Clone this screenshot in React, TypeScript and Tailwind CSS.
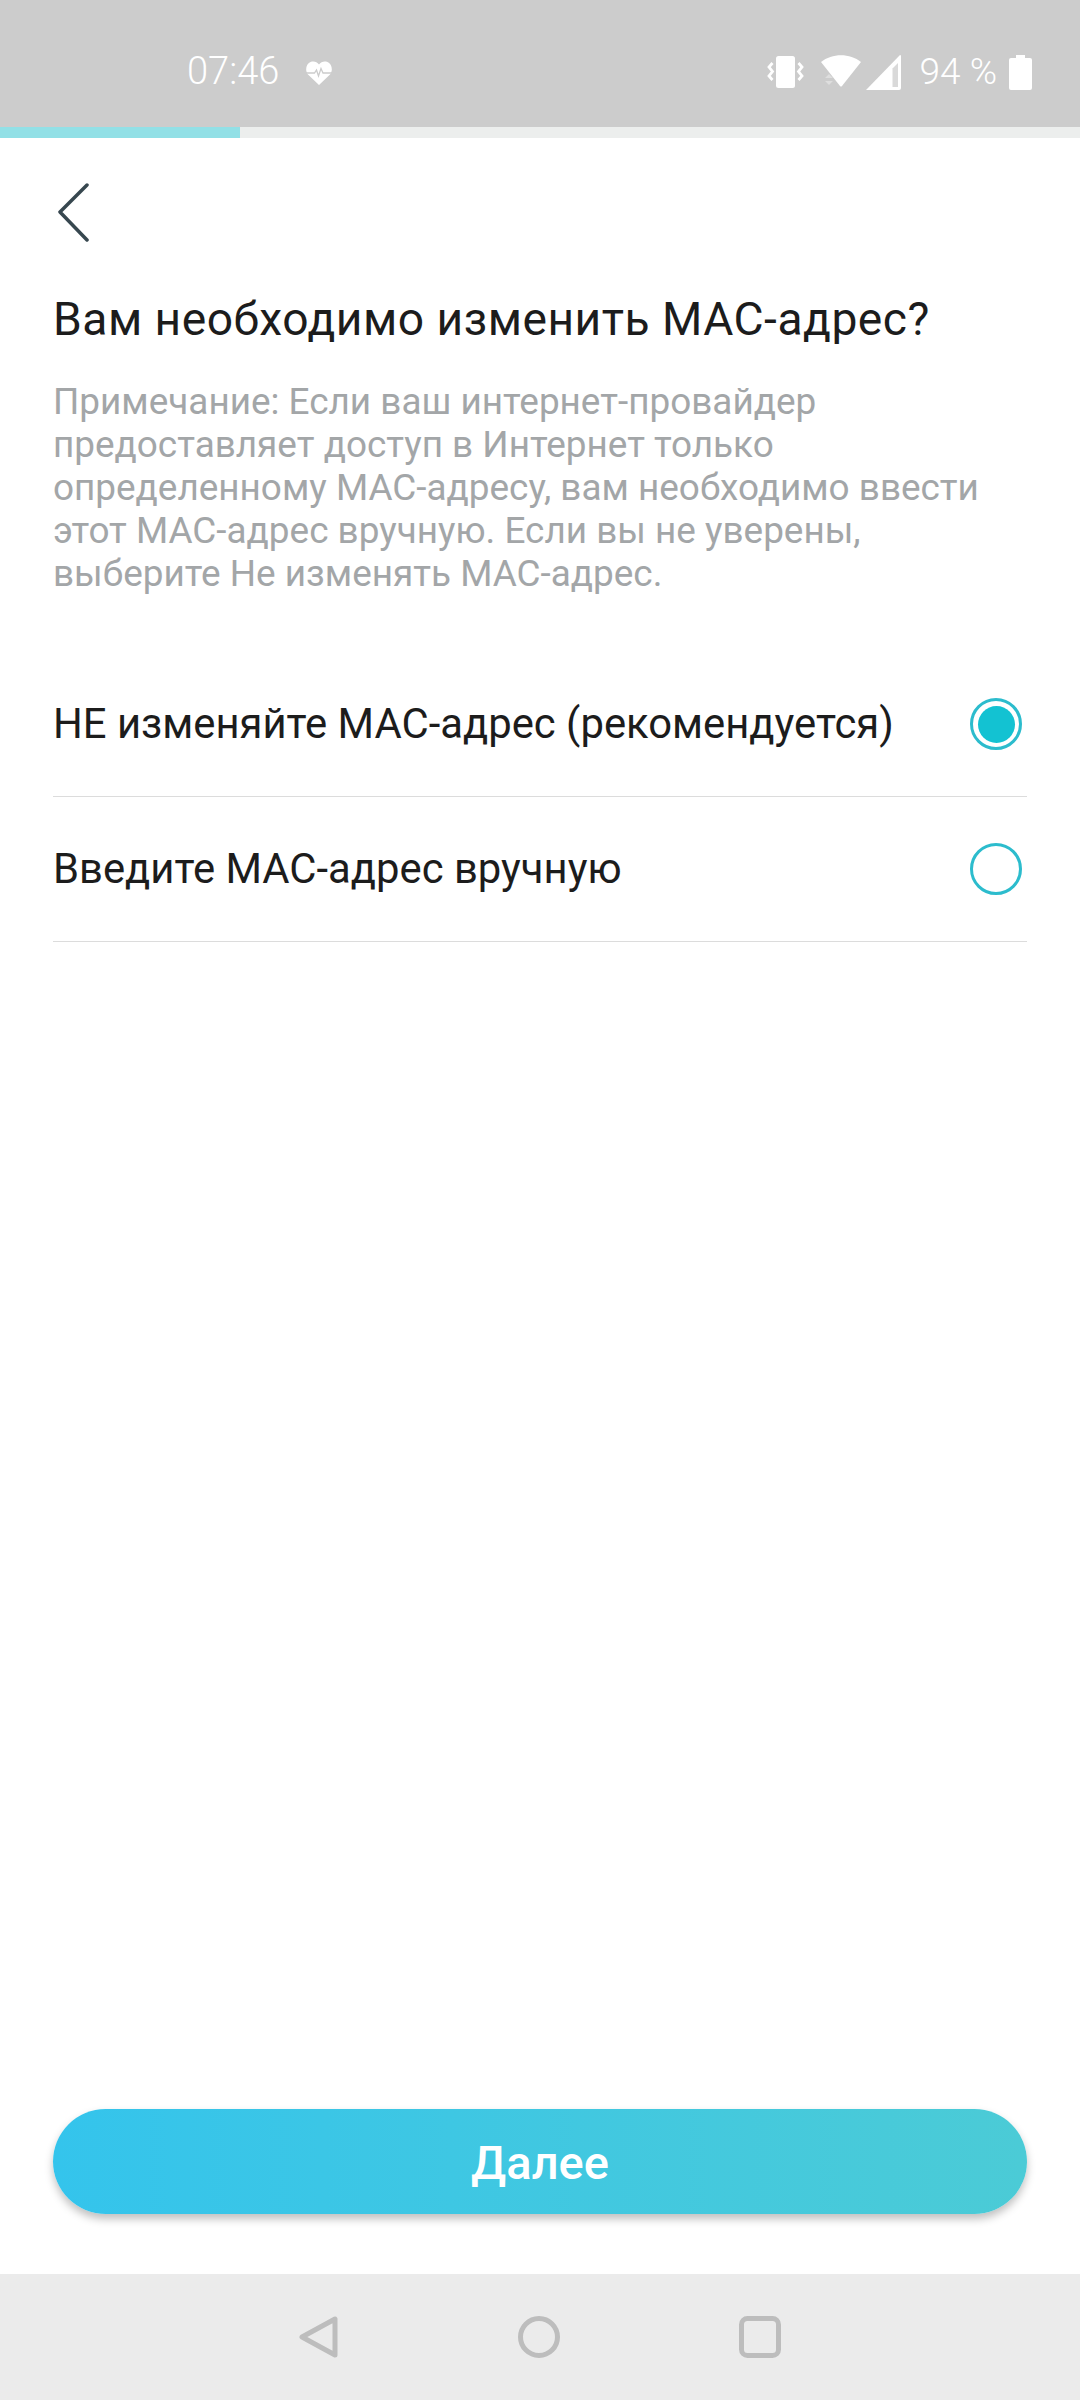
const FONT = "font-['Roboto','Noto_Sans',sans-serif]";

const options = [
  { label: 'НЕ изменяйте МАС-адрес (рекомендуется)', selected: true },
  { label: 'Введите МАС-адрес вручную', selected: false },
];

function StatusBar() {
  return (
    <div className="flex h-[127px] shrink-0 items-end bg-[#cccccc] pb-[37px] pl-[187px] pr-[48px] text-white">
      <span className="text-[38px] leading-[38px] font-light">07:46</span>
      <svg className="ml-[27px] mb-[5px] h-[24px] w-[26px]" viewBox="0 0 26 24">
        <path d="M13 24 L2 13.500 C-1 10 -0.500 3 5 0.800 C8 -0.300 11 0.800 13 3.500 C15 0.800 18 -0.300 21 0.800 C26.500 3 27 10 24 13.500 Z" fill="white" />
        <path d="M0 12 H8.500 L10.500 9 L12.500 15 L15 7.500 L17 12 H26" fill="none" stroke="#cccccc" strokeWidth="1.300" />
      </svg>
      <div className="ml-auto flex items-center">
        <svg className="h-[34px] w-[37px]" viewBox="0 0 37 34" fill="none" stroke="white">
          <rect x="9" y="1" width="19" height="32" rx="2.500" fill="white" stroke="none" />
          <path d="M5.500 8 L2 12 L5.500 16.500 L2 21 L5.500 25" strokeWidth="2.800" />
          <path d="M31.500 8 L35 12 L31.500 16.500 L35 21 L31.500 25" strokeWidth="2.800" />
        </svg>
        <svg className="ml-[17px] h-[34px] w-[40px]" viewBox="0 0 40 34">
          <path d="M0 7 C11 -2 29 -2 40 7 L21 31 Q20 32 19 31 Z" fill="white" />
          <path d="M4 23 L8 19 L12 23 Z M4 26 L12 26 L8 30 Z" fill="white" opacity="0.35" />
        </svg>
        <svg className="ml-[5px] h-[35px] w-[35px]" viewBox="0 0 35 35">
          <path d="M34 0 a1 1 0 0 1 1 1 V33 a2 2 0 0 1 -2 2 H0 Z" fill="white" />
          <path d="M32 8 L26.500 13.500 V32 H32 Z" fill="#d9d9d9" />
        </svg>
        <span className="ml-[19px] text-[37px] leading-[36px] font-light">94 %</span>
        <svg className="ml-[12px] h-[35px] w-[23px]" viewBox="0 0 23 35" fill="white">
          <path d="M7 0 H16 V3 H21 A2 2 0 0 1 23 5 V33 A2 2 0 0 1 21 35 H2 A2 2 0 0 1 0 33 V5 A2 2 0 0 1 2 3 H7 Z" />
        </svg>
      </div>
    </div>
  );
}

function NavBar() {
  return (
    <div className="flex h-[126px] shrink-0 items-center justify-center gap-[179px] bg-[#ebebeb]">
      <svg className="h-[42px] w-[40px]" viewBox="0 0 40 42" fill="none" stroke="#bdbdbd" strokeWidth="5" strokeLinejoin="round">
        <path d="M36 3 V39 L3 21 Z" />
      </svg>
      <svg className="h-[42px] w-[42px]" viewBox="0 0 42 42" fill="none" stroke="#bdbdbd" strokeWidth="5">
        <circle cx="21" cy="21" r="18.500" />
      </svg>
      <svg className="h-[42px] w-[42px]" viewBox="0 0 42 42" fill="none" stroke="#bdbdbd" strokeWidth="5">
        <rect x="2.500" y="2.500" width="37" height="37" rx="6" />
      </svg>
    </div>
  );
}

export default function App() {
  return (
    <div className={`flex h-[2400px] w-[1080px] flex-col overflow-hidden bg-white ${FONT}`}>
      <StatusBar />

      {/* progress */}
      <div className="h-[11px] shrink-0 bg-[#eceeed]">
        <div className="h-full w-[240px] bg-[#92e0e6]" />
      </div>

      <div className="flex flex-1 flex-col px-[53px]">
        <button className="mt-[45px] h-[60px] w-[36px]">
          <svg className="ml-[5px] h-[60px] w-[32px]" viewBox="0 0 32 60" fill="none" stroke="#37474f" strokeWidth="3.500" strokeLinecap="round" strokeLinejoin="round">
            <path d="M29 2 L2 29 L29 57" />
          </svg>
        </button>

        <h1 className="mt-[49px] text-[46.2px] leading-[54px] font-normal tracking-[0.5px] text-[#1c1c1c]">
          Вам необходимо изменить МАС-адрес?
        </h1>

        <p className="mt-[34px] text-[36.9px] leading-[43px] text-[#a3a6a8]">
          Примечание: Если ваш интернет-провайдер
          <br />
          предоставляет доступ в Интернет только
          <br />
          определенному МАС-адресу, вам необходимо ввести
          <br />
          этот МАС-адрес вручную. Если вы не уверены,
          <br />
          выберите Не изменять МАС-адрес.
        </p>

        <div className="mt-[57px]">
          {options.map((opt) => (
            <div key={opt.label} className="flex h-[145px] items-center justify-between border-b-[1.500px] border-[#dcdcdc] pr-[5px]">
              <span className="text-[41.8px] leading-[50px] text-[#1c1c1c]">{opt.label}</span>
              <span className="flex h-[52px] w-[52px] items-center justify-center rounded-full border-[3px] border-[#2cbccd]">
                {opt.selected && <span className="h-[37px] w-[37px] rounded-full bg-[#13c2d2]" />}
              </span>
            </div>
          ))}
        </div>

        <button className="mt-auto mb-[60px] h-[105px] w-full rounded-full bg-gradient-to-r from-[#34c4ec] to-[#4bcbd6] pt-[3px] text-[47px] font-medium text-white shadow-[0_5px_8px_rgba(0,0,0,0.25)]">
          Далее
        </button>
      </div>

      <NavBar />
    </div>
  );
}
